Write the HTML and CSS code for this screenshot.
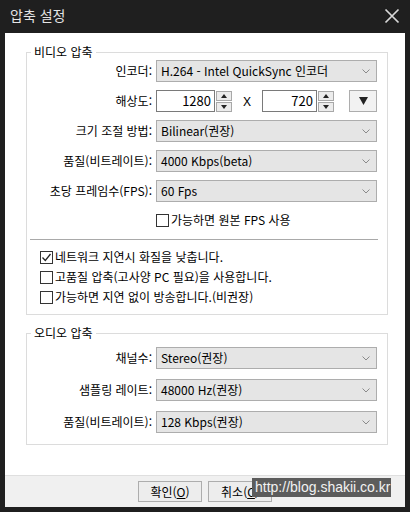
FILE: index.html
```
<!DOCTYPE html>
<html lang="ko">
<head>
<meta charset="utf-8">
<title>압축 설정</title>
<link rel="stylesheet" href="styles.css">
</head>
<body>
<div class="window">
  <div class="titlebar">
    <span class="title">압축 설정</span>
    <svg class="close" width="16" height="16" viewBox="0 0 16 16"><path d="M1.5 1.5 L14.5 14.5 M14.5 1.5 L1.5 14.5" stroke="#d8d8d8" stroke-width="1.7" fill="none"/></svg>
  </div>
  <div class="client">
    <div class="main">
      <fieldset class="group video">
        <legend>비디오 압축</legend>
        <div class="form">
          <span class="lbl">인코더:</span>
          <div class="select"><span>H.264 - Intel QuickSync 인코더</span><svg class="chev" width="8" height="5" viewBox="0 0 8 5"><path d="M0.5 0.5 L4 4 L7.5 0.5" stroke="#8a8a8a" fill="none"/></svg></div>
          <span class="lbl">해상도:</span>
          <div class="res">
            <div class="spinbox w1"><span class="num">1280</span><span class="spin"><span class="up"></span><span class="down"></span></span></div>
            <span class="x">X</span>
            <div class="spinbox w2"><span class="num">720</span><span class="spin"><span class="up"></span><span class="down"></span></span></div>
            <span class="ddbtn"><svg width="9" height="8" viewBox="0 0 9 8"><path d="M0 0 H9 L4.5 8 Z" fill="#222"/></svg></span>
          </div>
          <span class="lbl">크기 조절 방법:</span>
          <div class="select"><span>Bilinear(권장)</span><svg class="chev" width="8" height="5" viewBox="0 0 8 5"><path d="M0.5 0.5 L4 4 L7.5 0.5" stroke="#8a8a8a" fill="none"/></svg></div>
          <span class="lbl">품질(비트레이트):</span>
          <div class="select"><span>4000 Kbps(beta)</span><svg class="chev" width="8" height="5" viewBox="0 0 8 5"><path d="M0.5 0.5 L4 4 L7.5 0.5" stroke="#8a8a8a" fill="none"/></svg></div>
          <span class="lbl">초당 프레임수(FPS):</span>
          <div class="select"><span>60 Fps</span><svg class="chev" width="8" height="5" viewBox="0 0 8 5"><path d="M0.5 0.5 L4 4 L7.5 0.5" stroke="#8a8a8a" fill="none"/></svg></div>
        </div>
        <div class="check fps"><span class="cb"></span>가능하면 원본 FPS 사용</div>
        <div class="sep"></div>
        <div class="checks">
          <div class="check"><span class="cb"><svg width="11" height="11" viewBox="0 0 11 11"><path d="M1.5 5.5 L4.3 8.5 L9.5 2" stroke="#222" stroke-width="1.3" fill="none"/></svg></span>네트워크 지연시 화질을 낮춥니다.</div>
          <div class="check"><span class="cb"></span>고품질 압축(고사양 PC 필요)을 사용합니다.</div>
          <div class="check"><span class="cb"></span>가능하면 지연 없이 방송합니다.(비권장)</div>
        </div>
      </fieldset>
      <fieldset class="group audio">
        <legend>오디오 압축</legend>
        <div class="form">
          <span class="lbl">채널수:</span>
          <div class="select"><span>Stereo(권장)</span><svg class="chev" width="8" height="5" viewBox="0 0 8 5"><path d="M0.5 0.5 L4 4 L7.5 0.5" stroke="#8a8a8a" fill="none"/></svg></div>
          <span class="lbl">샘플링 레이트:</span>
          <div class="select"><span>48000 Hz(권장)</span><svg class="chev" width="8" height="5" viewBox="0 0 8 5"><path d="M0.5 0.5 L4 4 L7.5 0.5" stroke="#8a8a8a" fill="none"/></svg></div>
          <span class="lbl">품질(비트레이트):</span>
          <div class="select"><span>128 Kbps(권장)</span><svg class="chev" width="8" height="5" viewBox="0 0 8 5"><path d="M0.5 0.5 L4 4 L7.5 0.5" stroke="#8a8a8a" fill="none"/></svg></div>
        </div>
      </fieldset>
    </div>
    <div class="footer">
      <button class="btn">확인(<u>O</u>)</button>
      <button class="btn">취소(<u>C</u>)</button>
      <div class="watermark">http://blog.shakii.co.kr</div>
    </div>
  </div>
</div>
</body>
</html>
```
FILE: styles.css
```
* { box-sizing: border-box; }
html, body { margin: 0; padding: 0; }
body {
  background: #1f1f1f;
  font-family: "Noto Sans CJK KR", "Noto Sans", sans-serif;
  font-size: 12px;
  color: #000;
}
.window {
  width: 410px;
  height: 512px;
  display: flex;
  flex-direction: column;
  background: #1f1f1f;
}
.titlebar {
  height: 33px;
  flex: none;
  display: flex;
  align-items: center;
  justify-content: space-between;
  padding: 0 10px 2px 10px;
}
.title {
  color: #e4e4e4;
  font-size: 14px;
  line-height: 17px;
}
.close { display: block; }
.client {
  flex: 1;
  margin: 0 5px 5px 5px;
  background: #fff;
  display: flex;
  flex-direction: column;
}
.main {
  flex: 1;
  padding: 11px 17px 0 21px;
}
.group {
  margin: 0;
  padding: 0;
  border: 1px solid #dcdcdc;
  min-width: 0;
}
.group legend {
  margin-left: 4px;
  padding: 0 3px;
  line-height: 16px;
  font-size: 12px;
}
.audio { margin-top: 10px; padding-top: 6px; padding-bottom: 11px; }
.form {
  display: grid;
  grid-template-columns: 125px 221px;
  column-gap: 4px;
  grid-auto-rows: 22px;
  row-gap: 8px;
}
.audio .form { row-gap: 10px; }
.lbl {
  text-align: right;
  line-height: 22px;
  white-space: nowrap;
}
.select {
  display: flex;
  align-items: center;
  justify-content: space-between;
  background: #e5e5e5;
  border: 1px solid #adadad;
  padding: 0 6px 0 4px;
  line-height: 20px;
  white-space: nowrap;
}
.chev { display: block; }
.res {
  display: flex;
  align-items: center;
}
.spinbox {
  display: flex;
  align-items: center;
  height: 22px;
}
.w1 { width: 76px; }
.w2 { width: 72px; }
.num {
  flex: 1;
  height: 22px;
  border: 1px solid #7a7a7a;
  background: #fff;
  text-align: right;
  padding-right: 3px;
  line-height: 20px;
  font-size: 13px;
}
.spin {
  width: 16px;
  height: 21px;
  margin-left: 1px;
  display: flex;
  flex-direction: column;
  gap: 1px;
}
.spin .up, .spin .down {
  flex: 1;
  border: 1px solid #a8a8a8;
  background: #ececec;
  position: relative;
}
.spin .up::after, .spin .down::after {
  content: "";
  position: absolute;
  left: 4px;
  top: 2px;
  border-left: 3px solid transparent;
  border-right: 3px solid transparent;
}
.spin .up::after { border-bottom: 4px solid #222; }
.spin .down::after { border-top: 4px solid #222; top: 2px; }
.x {
  width: 30px;
  text-align: center;
  font-size: 13px;
  line-height: 22px;
  font-family: "Noto Sans", sans-serif;
}
.ddbtn {
  margin-left: auto;
  width: 28px;
  height: 22px;
  border: 1px solid #adadad;
  background: #f2f2f2;
  display: flex;
  align-items: center;
  justify-content: center;
}
.ddbtn svg { display: block; }
.check {
  display: flex;
  align-items: center;
  height: 20px;
  line-height: 20px;
  gap: 2px;
  white-space: nowrap;
}
.cb {
  width: 13px;
  height: 13px;
  border: 1px solid #333;
  background: #fff;
  flex: none;
  display: flex;
  align-items: center;
  justify-content: center;
}
.cb svg { display: block; }
.fps {
  margin-top: 8px;
  padding-left: 129px;
}
.sep {
  margin: 9px 9px 0 3px;
  border-top: 1px solid #a9a9a9;
}
.checks {
  margin-top: 7px;
  padding: 0 0 7px 13px;
}
.footer {
  flex: none;
  height: 32px;
  border-top: 1px solid #dfdfdf;
  background: #f0f0f0;
  display: flex;
  justify-content: center;
  align-items: flex-start;
  gap: 6px;
  padding-top: 5px;
  position: relative;
}
.btn {
  width: 64px;
  height: 21px;
  margin: 0;
  padding: 0;
  border: 1px solid #adadad;
  background: #ededed;
  font-family: "Noto Sans CJK KR", "Noto Sans", sans-serif;
  font-size: 12px;
  line-height: 19px;
  color: #000;
}
.watermark {
  position: absolute;
  left: 247px;
  top: 2px;
  width: 139px;
  height: 19px;
  background: #5c5c5c;
  color: #f2f2f2;
  font-family: "Liberation Sans", sans-serif;
  font-size: 14px;
  line-height: 19px;
  padding-left: 3px;
  white-space: nowrap;
}
```
